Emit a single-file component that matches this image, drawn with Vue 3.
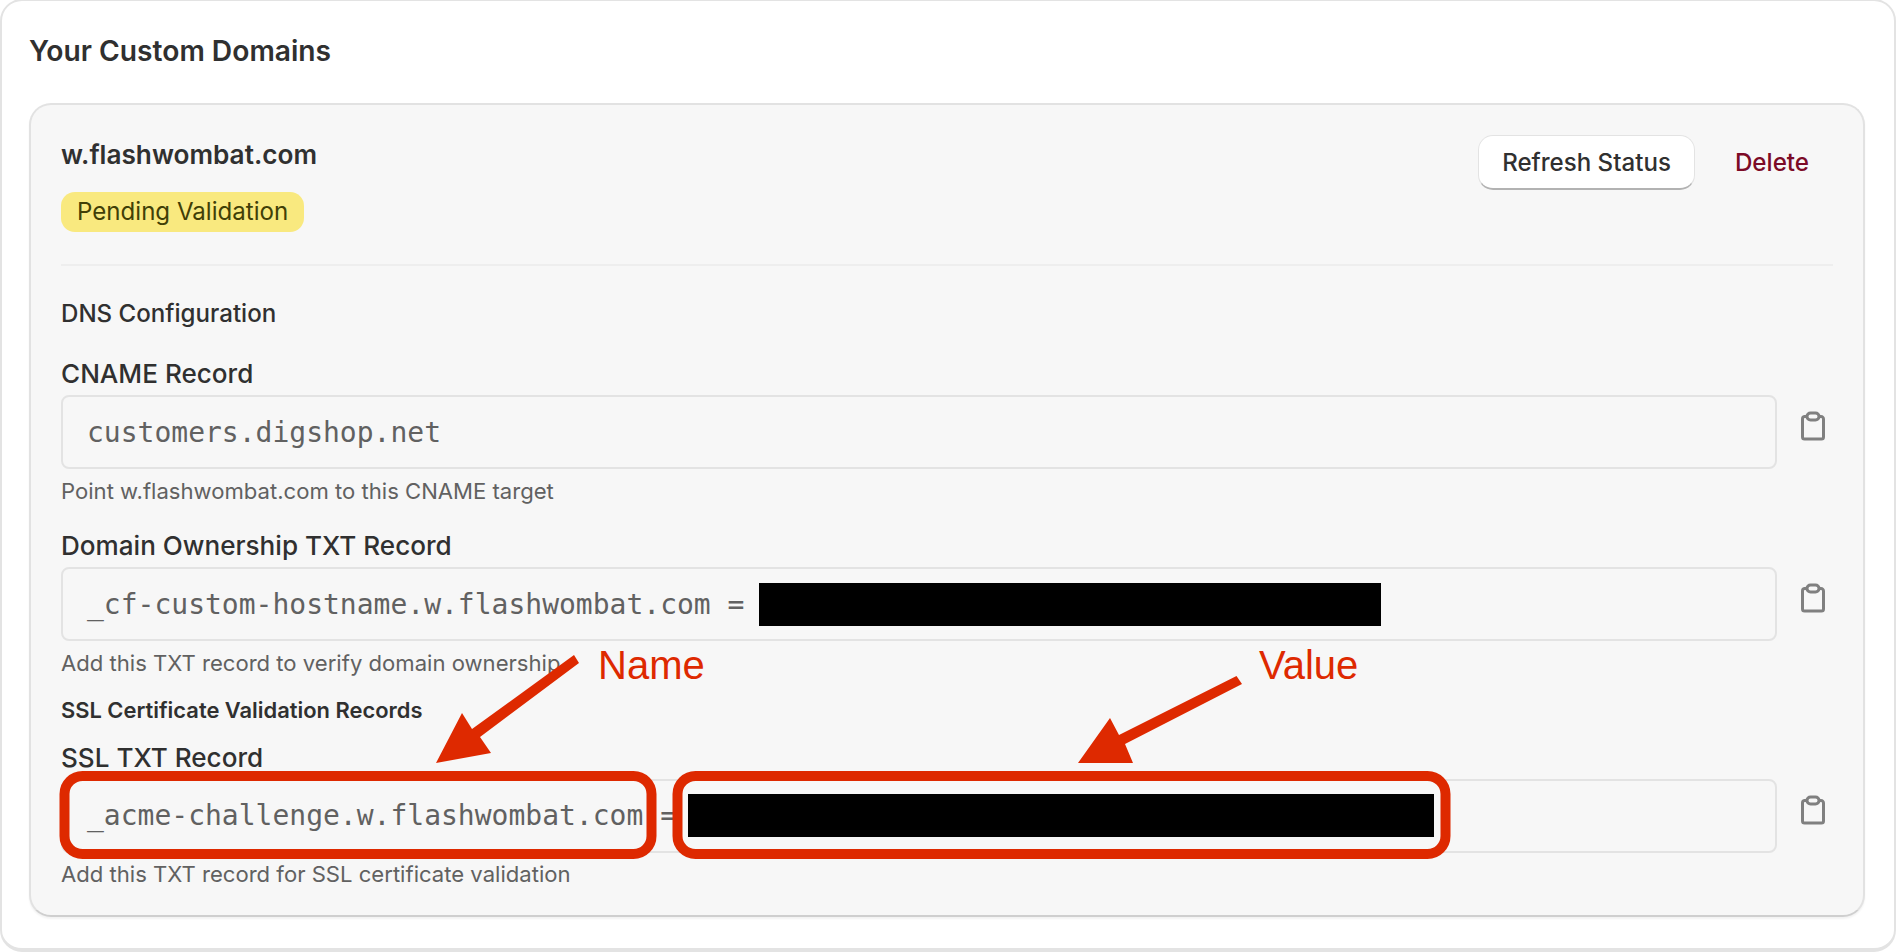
<script setup>
const records = [
  { label: 'CNAME Record', value: 'customers.digshop.net', redact: 0, help: 'Point w.flashwombat.com to this CNAME target' },
  { label: 'Domain Ownership TXT Record', value: '_cf-custom-hostname.w.flashwombat.com = ', redact: 622, offset: -2, help: 'Add this TXT record to verify domain ownership' },
]
const ssl = { label: 'SSL TXT Record', value: '_acme-challenge.w.flashwombat.com = ', redact: 746, offset: -6, help: 'Add this TXT record for SSL certificate validation' }
</script>

<template>
  <div class="page">
    <section class="panel">
      <h2 class="title">Your Custom Domains</h2>
      <article class="domain">
        <header class="head">
          <div>
            <div class="name">w.flashwombat.com</div>
            <span class="badge">Pending Validation</span>
          </div>
          <div class="actions">
            <button class="refresh">Refresh Status</button>
            <button class="delete">Delete</button>
          </div>
        </header>

        <h3 class="dns">DNS Configuration</h3>
        <div v-for="r in records" :key="r.label" class="field">
          <label class="label">{{ r.label }}</label>
          <div class="row">
            <div class="input">
              <span class="mono">{{ r.value }}</span>
              <span v-if="r.redact" class="redact" :style="{ width: r.redact + 'px', marginLeft: r.offset + 'px' }"></span>
            </div>
            <button class="copy" aria-label="Copy">
              <svg width="26" height="30" viewBox="0 0 26 30" fill="none" stroke="#808080" stroke-width="3">
                <path d="M7 5.500H4.500A2.500 2.500 0 0 0 2.500 8V26a2 2 0 0 0 2 2H21.500a2 2 0 0 0 2-2V8a2.500 2.500 0 0 0-2.500-2.500H19" />
                <rect x="7" y="2" width="12" height="7" rx="3.500" />
              </svg>
            </button>
          </div>
          <p class="help">{{ r.help }}</p>
        </div>

        <h4 class="ssl">SSL Certificate Validation Records</h4>
        <div class="field sslfield">
          <label class="label">{{ ssl.label }}</label>
          <div class="row">
            <div class="input raised">
              <span class="mono">{{ ssl.value }}</span>
              <span class="redact" :style="{ width: ssl.redact + 'px', marginLeft: ssl.offset + 'px' }"></span>
            </div>
            <button class="copy" aria-label="Copy">
              <svg width="26" height="30" viewBox="0 0 26 30" fill="none" stroke="#808080" stroke-width="3">
                <path d="M7 5.500H4.500A2.500 2.500 0 0 0 2.500 8V26a2 2 0 0 0 2 2H21.500a2 2 0 0 0 2-2V8a2.500 2.500 0 0 0-2.500-2.500H19" />
                <rect x="7" y="2" width="12" height="7" rx="3.500" />
              </svg>
            </button>
          </div>
          <p class="help near">{{ ssl.help }}</p>
        </div>
      </article>
    </section>

    <svg class="notes" width="1898" height="952" viewBox="0 0 1898 952">
      <rect x="64.500" y="776" width="587" height="78" rx="18" fill="none" stroke="#de2900" stroke-width="10" />
      <rect x="677.500" y="776" width="768" height="78" rx="18" fill="none" stroke="#de2900" stroke-width="10" />
      <path d="M436 763 462 713 472 729 574 655 579 663 480 737 491 753Z" fill="#de2900" />
      <path d="M1078 763 1110 718 1119 735 1236.500 676 1242 684 1125 744 1133 763Z" fill="#de2900" />
      <text x="598" y="679" class="note">Name</text>
      <text x="1259" y="679" class="note">Value</text>
    </svg>
  </div>
</template>

<style>
html, body { margin: 0; background: #fff; }
</style>

<style scoped>
.page {
  position: relative;
  width: 1898px;
  height: 952px;
  overflow: hidden;
  font-family: Inter, "Liberation Sans", sans-serif;
  color: #303030;
}
.panel {
  box-sizing: border-box;
  width: 1896px;
  height: 953px;
  margin-top: -1px;
  padding: 35px 29px 0;
  background: #fff;
  border: 2px solid #e3e3e3;
  border-bottom-width: 4px;
  border-radius: 22px;
}
.title {
  margin: 0 0 37px -2px;
  font-size: 28.200px;
  line-height: 30px;
  font-weight: 600;
}
.domain {
  box-sizing: border-box;
  width: 1836px;
  height: 814px;
  margin-left: -2px;
  padding: 34px 30px 0;
  background: #f7f7f7;
  border: 2px solid #e2e2e2;
  border-bottom-color: #cfcfcf;
  border-radius: 22px;
  box-shadow: 0 2px 2px rgba(0, 0, 0, 0.05);
}
.head {
  display: flex;
  justify-content: space-between;
  align-items: flex-start;
  height: 93px;
  padding-bottom: 32px;
  border-bottom: 2px solid #eeeeee;
}
.name {
  font-size: 26.200px;
  line-height: 32px;
  font-weight: 600;
  margin-bottom: 21px;
}
.badge {
  display: inline-block;
  height: 40px;
  padding: 0 16px;
  line-height: 40px;
  font-size: 24.100px;
  color: #413f07;
  background: #f9e97f;
  border-radius: 14px;
}
.actions {
  display: flex;
  align-items: center;
  gap: 17px;
  margin-top: -4px;
  margin-right: 1px;
}
button {
  font-family: inherit;
  background: none;
  border: none;
  padding: 0;
}
.refresh {
  box-sizing: border-box;
  width: 217px;
  height: 55px;
  font-size: 24.100px;
  font-weight: 500;
  color: #303030;
  background: #fff;
  border: 1.500px solid #e3e3e3;
  border-bottom: 2px solid #b2b2b2;
  border-radius: 15px;
}
.delete {
  width: 120px;
  height: 55px;
  font-size: 24.200px;
  font-weight: 500;
  color: #7c0a26;
}
.dns {
  margin: 33px 0 0;
  font-size: 24.100px;
  line-height: 30px;
  font-weight: 500;
}
.field { margin-top: 30px; }
.field + .field { margin-top: 26px; }
.label {
  display: block;
  font-size: 26.100px;
  line-height: 30px;
  font-weight: 500;
  margin-bottom: 6px;
}
.row {
  display: flex;
  align-items: center;
  gap: 16px;
}
.input {
  flex: 1;
  box-sizing: border-box;
  height: 74px;
  padding: 0 24px;
  display: flex;
  align-items: center;
  border: 2px solid #e3e3e3;
  border-radius: 8px;
}
.raised { padding-bottom: 2px; }
.mono {
  font-family: "DejaVu Sans Mono", "Liberation Mono", monospace;
  font-size: 28px;
  color: #616161;
  white-space: pre;
}
.redact {
  display: block;
  height: 43px;
  background: #000;
  flex: none;
}
.copy {
  width: 40px;
  height: 40px;
  display: flex;
  align-items: center;
  justify-content: center;
  margin-top: -12px;
}
.help {
  margin: 8px 0 0;
  font-size: 22.100px;
  line-height: 28px;
  color: #616161;
}
.near { margin-top: 7px; }
.ssl {
  margin: 19px 0 0;
  font-size: 21.900px;
  line-height: 28px;
  font-weight: 600;
}
.sslfield { margin-top: 19px; }
.notes {
  position: absolute;
  inset: 0;
  pointer-events: none;
}
.note {
  font-family: "Liberation Sans", Arial, sans-serif;
  font-size: 40px;
  fill: #de2900;
}
</style>
